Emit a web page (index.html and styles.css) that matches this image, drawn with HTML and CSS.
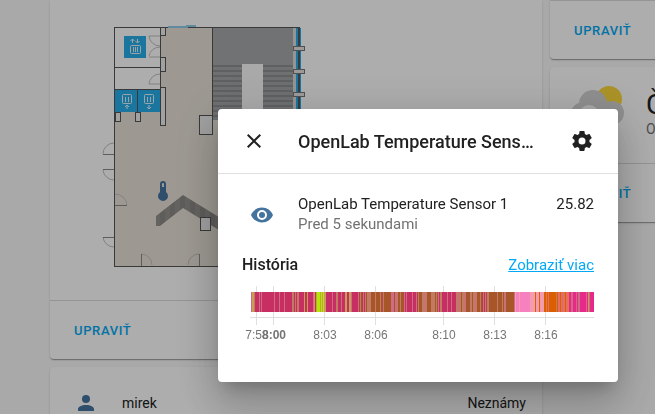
FILE: index.html
```html
<!DOCTYPE html>
<html lang="sk">
<head>
    <meta charset="UTF-8">
    <meta name="viewport" content="width=device-width, initial-scale=1.0">
    <title>OpenLab</title>
    <link rel="stylesheet" href="styles.css">
</head>
<body>

    <main class="view">
        <div class="column">
            <!-- Floor plan -->
            <section class="card card-top">
                <svg class="floorplan" viewBox="50 0 492 300" aria-hidden="true">
                    <defs>
                        <pattern id="stairs" x="0" y="65" width="8" height="5" patternUnits="userSpaceOnUse">
                            <rect width="8" height="5" fill="#a2a5a8"/>
                            <rect width="8" height="2" fill="#8b8e91"/>
                        </pattern>
                        <pattern id="bench" width="10" height="8" patternUnits="userSpaceOnUse">
                            <rect width="10" height="8" fill="#94928e"/>
                            <rect width="5" height="8" fill="#8b8986"/>
                        </pattern>
                    </defs>
                    <rect x="115" y="27" width="184" height="239" fill="#e8e2d8"/>
                    <rect x="115" y="27" width="46" height="63" fill="#fff"/>
                    <rect x="213" y="28" width="80" height="37" fill="#a5a8aa"/>
                    <rect x="213" y="65" width="80" height="55" fill="url(#stairs)"/>
                    <rect x="242" y="64" width="21" height="56" fill="#fafafa"/>
                    <rect x="293" y="28" width="4" height="92" fill="#dcdcdc"/>
                    <path d="M156 216L183 195L240 230V243L183 208L160 226H156Z" fill="url(#bench)"/>

                    <!-- Lifts -->
                    <g fill="#28aeeb">
                        <rect x="124" y="36" width="22" height="22"/>
                        <rect x="115" y="90" width="45" height="22"/>
                    </g>
                    <g fill="none" stroke="#e8f4fa">
                        <rect x="130.5" y="45.5" width="10" height="8" rx="1"/>
                        <path d="M133.5 47V52M135.5 47V52M137.5 47V52M132.5 43V39M130.5 41L132.5 39L134.5 41M137.5 39V43M135.5 41L137.5 43L139.5 41"/>
                        <rect x="122.5" y="94.5" width="9" height="9" rx="1"/>
                        <path d="M125.5 97V102M128.5 97V102M127 109V105M125 107L127 105L129 107"/>
                        <rect x="144.5" y="94.5" width="9" height="9" rx="1"/>
                        <path d="M147.5 97V102M150.5 97V102M149 105V109M147 107L149 109L151 107"/>
                    </g>

                    <!-- Doors -->
                    <g fill="none" stroke="#c2c0bc">
                        <path d="M149 36A11 11 0 0 0 160 46M160 47A11 11 0 0 0 149 56M149 36H160M149 57H160M149 84A11 11 0 0 1 160 74M149 84H160"/>
                        <path d="M103 154A11 11 0 0 1 114 143M103 170A11 11 0 0 0 114 180M103 237A11 11 0 0 0 114 247"/>
                        <path d="M115 194A12 12 0 0 1 127 205M141 254A11 11 0 0 1 152 265M199 254A11 11 0 0 0 188 265"/>
                    </g>
                    <g fill="none" stroke="#8a8a8a">
                        <path d="M103 154.5H114M103 169.5H114M103 237.5H114M115 205.5H127M141.5 254V266M199.5 254V266"/>
                    </g>

                    <!-- Walls -->
                    <g fill="none" stroke="#555">
                        <path d="M114.5 27V267"/>
                        <path d="M114 27.5H299M114 266.5H299M115 67.5H160M115 89.5H160M137.5 90V112M160.5 27V125M212.5 27V135"/>
                    </g>
                    <g fill="#ededed" stroke="#555">
                        <rect x="160.5" y="27.5" width="5" height="8"/>
                        <rect x="160.5" y="57.5" width="5" height="14"/>
                        <rect x="160.5" y="87.5" width="5" height="38"/>
                        <rect x="115.5" y="112.5" width="5" height="9"/>
                        <rect x="135.5" y="112.5" width="5" height="9"/>
                        <rect x="199.5" y="115.5" width="13" height="19"/>
                        <rect x="200.5" y="217.5" width="10" height="13"/>
                    </g>
                    <path d="M168 27H187V26H196" fill="none" stroke="#8ecdea" stroke-width="2"/>
                    <rect x="296" y="28" width="5" height="238" fill="#28aeeb"/>
                    <rect x="298" y="27" width="2" height="240" fill="#505a60"/>
                    <g fill="#e4e4e4" stroke="#777">
                        <rect x="293.5" y="46.5" width="11" height="4"/>
                        <rect x="293.5" y="69.5" width="11" height="4"/>
                        <rect x="293.5" y="92.5" width="11" height="4"/>
                    </g>

                    <!-- Thermometer -->
                    <path transform="translate(151 179)" fill="#44739e" d="M15 13V5A3 3 0 0 0 9 5V13A5 5 0 1 0 15 13M12 4A1 1 0 0 1 13 5V8H11V5A1 1 0 0 1 12 4Z"/>
                </svg>
                <div class="card-actions">
                    <button class="text-btn">Upraviť</button>
                </div>
            </section>

            <section class="card person">
                <svg class="icon state-icon" viewBox="0 0 24 24" aria-hidden="true"><path d="M12,4A4,4 0 0,1 16,8A4,4 0 0,1 12,12A4,4 0 0,1 8,8A4,4 0 0,1 12,4M12,14C16.42,14 20,15.79 20,18V20H4V18C4,15.79 7.58,14 12,14Z"/></svg>
                <span class="person-name">mirek</span>
                <span>Neznámy</span>
            </section>
        </div>

        <div class="column">
            <section class="card card-top">
                <div class="card-actions">
                    <button class="text-btn">Upraviť</button>
                </div>
            </section>

            <!-- Weather -->
            <section class="card">
                <div class="weather">
                    <svg class="weather-icon" viewBox="0 0 64 64" aria-hidden="true">
                        <circle cx="43" cy="24" r="13" fill="#fdd93c"/>
                        <g fill="#d3d3d3">
                            <circle cx="27" cy="29" r="14"/>
                            <circle cx="46" cy="38" r="12"/>
                            <circle cx="17" cy="39" r="12"/>
                            <rect x="17" y="36" width="29" height="14"/>
                        </g>
                        <circle cx="23" cy="40" r="10" fill="#f9f9f9"/>
                    </svg>
                    <div class="weather-info">
                        <div class="weather-state">Č</div>
                        <div class="weather-name">O</div>
                    </div>
                </div>
                <div class="card-actions">
                    <button class="text-btn">Upraviť</button>
                </div>
            </section>
        </div>
    </main>

    <div class="scrim"></div>

    <!-- More info dialog -->
    <div class="dialog" role="dialog" aria-labelledby="dialogTitle">
        <header class="dialog-header">
            <button class="icon-btn" aria-label="Zavrieť">
                <svg class="icon" viewBox="0 0 24 24"><path d="M19,6.41L17.59,5L12,10.59L6.41,5L5,6.41L10.59,12L5,17.59L6.41,19L12,13.41L17.59,19L19,17.59L13.41,12L19,6.41Z"/></svg>
            </button>
            <h2 class="dialog-title" id="dialogTitle">OpenLab Temperature Sensor 1</h2>
            <button class="icon-btn" aria-label="Nastavenia">
                <svg class="icon" viewBox="0 0 24 24"><path d="M12,15.5A3.5,3.5 0 0,1 8.5,12A3.5,3.5 0 0,1 12,8.5A3.5,3.5 0 0,1 15.5,12A3.5,3.5 0 0,1 12,15.5M19.43,12.97C19.47,12.65 19.5,12.33 19.5,12C19.5,11.67 19.47,11.34 19.43,11L21.54,9.37C21.73,9.22 21.78,8.95 21.66,8.73L19.66,5.27C19.54,5.05 19.27,4.96 19.05,5.05L16.56,6.05C16.04,5.66 15.5,5.32 14.87,5.07L14.5,2.42C14.46,2.18 14.25,2 14,2H10C9.75,2 9.54,2.18 9.5,2.42L9.13,5.07C8.5,5.32 7.96,5.66 7.44,6.05L4.95,5.05C4.73,4.96 4.46,5.05 4.34,5.27L2.34,8.73C2.21,8.95 2.27,9.22 2.46,9.37L4.57,11C4.53,11.34 4.5,11.67 4.5,12C4.5,12.33 4.53,12.65 4.57,12.97L2.46,14.63C2.27,14.78 2.21,15.05 2.34,15.27L4.34,18.73C4.46,18.95 4.73,19.03 4.95,18.95L7.44,17.94C7.96,18.34 8.5,18.68 9.13,18.93L9.5,21.58C9.54,21.82 9.75,22 10,22H14C14.25,22 14.46,21.82 14.5,21.58L14.87,18.93C15.5,18.67 16.04,18.34 16.56,17.94L19.05,18.95C19.27,19.03 19.54,18.95 19.66,18.73L21.66,15.27C21.78,15.05 21.73,14.78 21.54,14.63L19.43,12.97Z"/></svg>
            </button>
        </header>

        <div class="dialog-content">
            <div class="state-row">
                <svg class="icon state-icon" viewBox="0 0 24 24" aria-hidden="true"><path d="M12,9A3,3 0 0,0 9,12A3,3 0 0,0 12,15A3,3 0 0,0 15,12A3,3 0 0,0 12,9M12,17A5,5 0 0,1 7,12A5,5 0 0,1 12,7A5,5 0 0,1 17,12A5,5 0 0,1 12,17M12,4.5C7,4.5 2.73,7.61 1,12C2.73,16.39 7,19.5 12,19.5C17,19.5 21.27,16.39 23,12C21.27,7.61 17,4.5 12,4.5Z"/></svg>
                <div class="state-info">
                    <div>OpenLab Temperature Sensor 1</div>
                    <div class="state-time">Pred 5 sekundami</div>
                </div>
                <div class="state-value">25.82</div>
            </div>

            <div class="history-header">
                <h3 class="history-title">História</h3>
                <a class="history-link" href="#">Zobraziť viac</a>
            </div>

            <svg class="timeline" viewBox="0 0 352 60">
                <g stroke="#dfdfdf">
                    <path d="M14.5 0V39M31.5 0V39M82.5 0V39M133.5 0V39M201.5 0V39M252.5 0V39M303.5 0V39M8 31.5H352"/>
                </g>
                <g id="timelineBars"></g>
                <g class="timeline-labels">
                    <text x="15" y="53">7:58</text>
                    <text x="32" y="53" class="major">8:00</text>
                    <text x="83" y="53">8:03</text>
                    <text x="134" y="53">8:06</text>
                    <text x="202" y="53">8:10</text>
                    <text x="253" y="53">8:13</text>
                    <text x="304" y="53">8:16</text>
                </g>
            </svg>
        </div>
    </div>

    <script>
        const timelineBars = document.getElementById('timelineBars');
        const timelineEnd = 352;

        // One colour per group of similar values
        const colors = {
            M: '#c72e62', P: '#cf6b85', G: '#c4a050', L: '#b3e900',
            B: '#a65628', T: '#c17b63', K: '#f781bf', S: '#f39cb0',
            O: '#d95f02', Q: '#e8705a', H: '#e7298a'
        };

        // Start on the time axis, then the colour key
        const history = (
            '9P 10G 12T 13M 17P 18M 19P 20M 32P 33M 37P 38M 42P 43M 50T 52M 53T 54M 55T 57M 62G 63M 65G 66M ' +
            '71P 72G 73M 74G 75L 78G 79L 80G 81L 82G 84M 90P 91M 94T 96M 99P 100M 103G 105M 107G 109P 110M ' +
            '116T 117M 118T 119B 120M 121T 122M 123T 124B 125T 129B 133T 134B 138T 139B 141P 142B 149P 152B ' +
            '153P 155T 156B 158T 159B 162P 163M 164P 165M 170P 171M 174T 175M 176T 177B 180T 182P 183T 185B ' +
            '189T 193B 194T 195B 196P 197M 198T 200M 205P 206M 209P 210M 214T 216P 217T 219B 220T 222P 223T ' +
            '224B 228T 230B 231T 233P 234T 235B 238T 239B 240M 241T 242M 243T 244B 245P 246T 247B 255T 256B ' +
            '260T 261B 262P 263T 264B 272P 273S 274K 277S 278K 288S 293O 294S 297O 298S 302O 304Q 305O 306Q ' +
            '307O 314T 315O 316Q 318O 319Q 320P 321Q 323O 324Q 327H 329P 331H 334P 335H 336P 338H 344P 345H ' +
            '346G 347P 348H'
        ).split(' ').map(entry => ({ start: parseInt(entry), key: entry.slice(-1) }));

        timelineBars.innerHTML = history.map((entry, i) => {
            const end = i + 1 < history.length ? history[i + 1].start : timelineEnd;
            return `<rect x="${entry.start}" y="6" width="${end - entry.start}" height="20" fill="${colors[entry.key]}"/>`;
        }).join('');
    </script>

</body>
</html>
```
FILE: styles.css
```css
body {
    font-family: Roboto, 'Noto Sans', sans-serif;
    font-size: 14px;
    background-color: #fafafa;
    margin: 0;
    color: #212121;
    overflow: hidden;
}

/* Dashboard */
.view {
    display: grid;
    grid-template-columns: repeat(2, minmax(492px, 500px));
    gap: 8px;
    align-items: start;
    padding-left: 50px;
    height: 100vh;
    box-sizing: border-box;
    overflow: hidden;
}

.column {
    display: flex;
    flex-direction: column;
    gap: 8px;
}

.card {
    background-color: #fff;
    border-radius: 4px;
    box-shadow: 0 2px 1px -1px rgba(0, 0, 0, 0.2), 0 1px 1px 0 rgba(0, 0, 0, 0.14), 0 1px 3px 0 rgba(0, 0, 0, 0.12);
}

.card-top {
    border-top-left-radius: 0;
    border-top-right-radius: 0;
}

.floorplan {
    display: block;
    width: 100%;
}

.card-actions {
    border-top: 1px solid #dadada;
    padding: 12px 16px;
}

.text-btn {
    display: block;
    height: 34px;
    padding: 0 8px;
    border: none;
    background: none;
    color: #03a9f4;
    font-family: inherit;
    font-size: 13px;
    font-weight: 500;
    letter-spacing: 0.05em;
    text-transform: uppercase;
    cursor: pointer;
}

.icon {
    display: block;
    flex: none;
    width: 24px;
    height: 24px;
    fill: currentColor;
}

.state-icon {
    color: #44739e;
}

.person {
    display: flex;
    align-items: center;
    padding: 16px 16px 16px 24px;
    height: 40px;
}

.person-name {
    flex: 1;
    margin-left: 24px;
}

.weather {
    display: flex;
    align-items: center;
    gap: 16px;
    height: 64px;
    padding: 8px 16px 24px;
}

.weather-icon {
    flex: none;
    width: 64px;
    height: 64px;
}

.weather-info {
    padding-top: 12px;
}

.weather-state {
    font-size: 28px;
    line-height: 32px;
}

.weather-name {
    color: #727272;
}

.scrim {
    position: fixed;
    inset: 0;
    background-color: rgba(0, 0, 0, 0.32);
}

/* Dialog */
.dialog {
    position: fixed;
    top: 109px;
    left: 218px;
    width: 400px;
    background-color: #fff;
    border-radius: 4px;
    box-shadow: 0 11px 15px -7px rgba(0, 0, 0, 0.2), 0 24px 38px 3px rgba(0, 0, 0, 0.14), 0 9px 46px 8px rgba(0, 0, 0, 0.12);
}

.dialog-header {
    display: flex;
    align-items: center;
    height: 64px;
    padding: 0 12px;
    border-bottom: 1px solid #dfdfdf;
}

.icon-btn {
    flex: none;
    padding: 12px;
    border: none;
    background: none;
    color: #212121;
    cursor: pointer;
}

.dialog-title {
    flex: 1;
    margin: 0 20px;
    font-size: 18px;
    font-weight: 500;
    white-space: nowrap;
    overflow: hidden;
    text-overflow: ellipsis;
}

.dialog-content {
    padding: 20px 24px 36px;
}

.state-row {
    display: flex;
    font-size: 15px;
    line-height: 20px;
}

.state-row .state-icon {
    margin: 9px 8px;
}

.state-info {
    flex: 1;
    margin-left: 16px;
}

.state-time {
    color: #727272;
}

.history-header {
    display: flex;
    justify-content: space-between;
    align-items: center;
    margin: 17px 0 9px;
    line-height: 24px;
}

.history-title {
    margin: 0;
    font-size: 16px;
    font-weight: 500;
}

.history-link {
    color: #03a9f4;
    font-size: 15px;
}

.timeline {
    display: block;
    width: 100%;
}

.timeline-labels {
    font-family: 'Liberation Sans', Arial, sans-serif;
    font-size: 12px;
    fill: #757575;
    text-anchor: middle;
}

.timeline-labels .major {
    font-weight: bold;
}
```
